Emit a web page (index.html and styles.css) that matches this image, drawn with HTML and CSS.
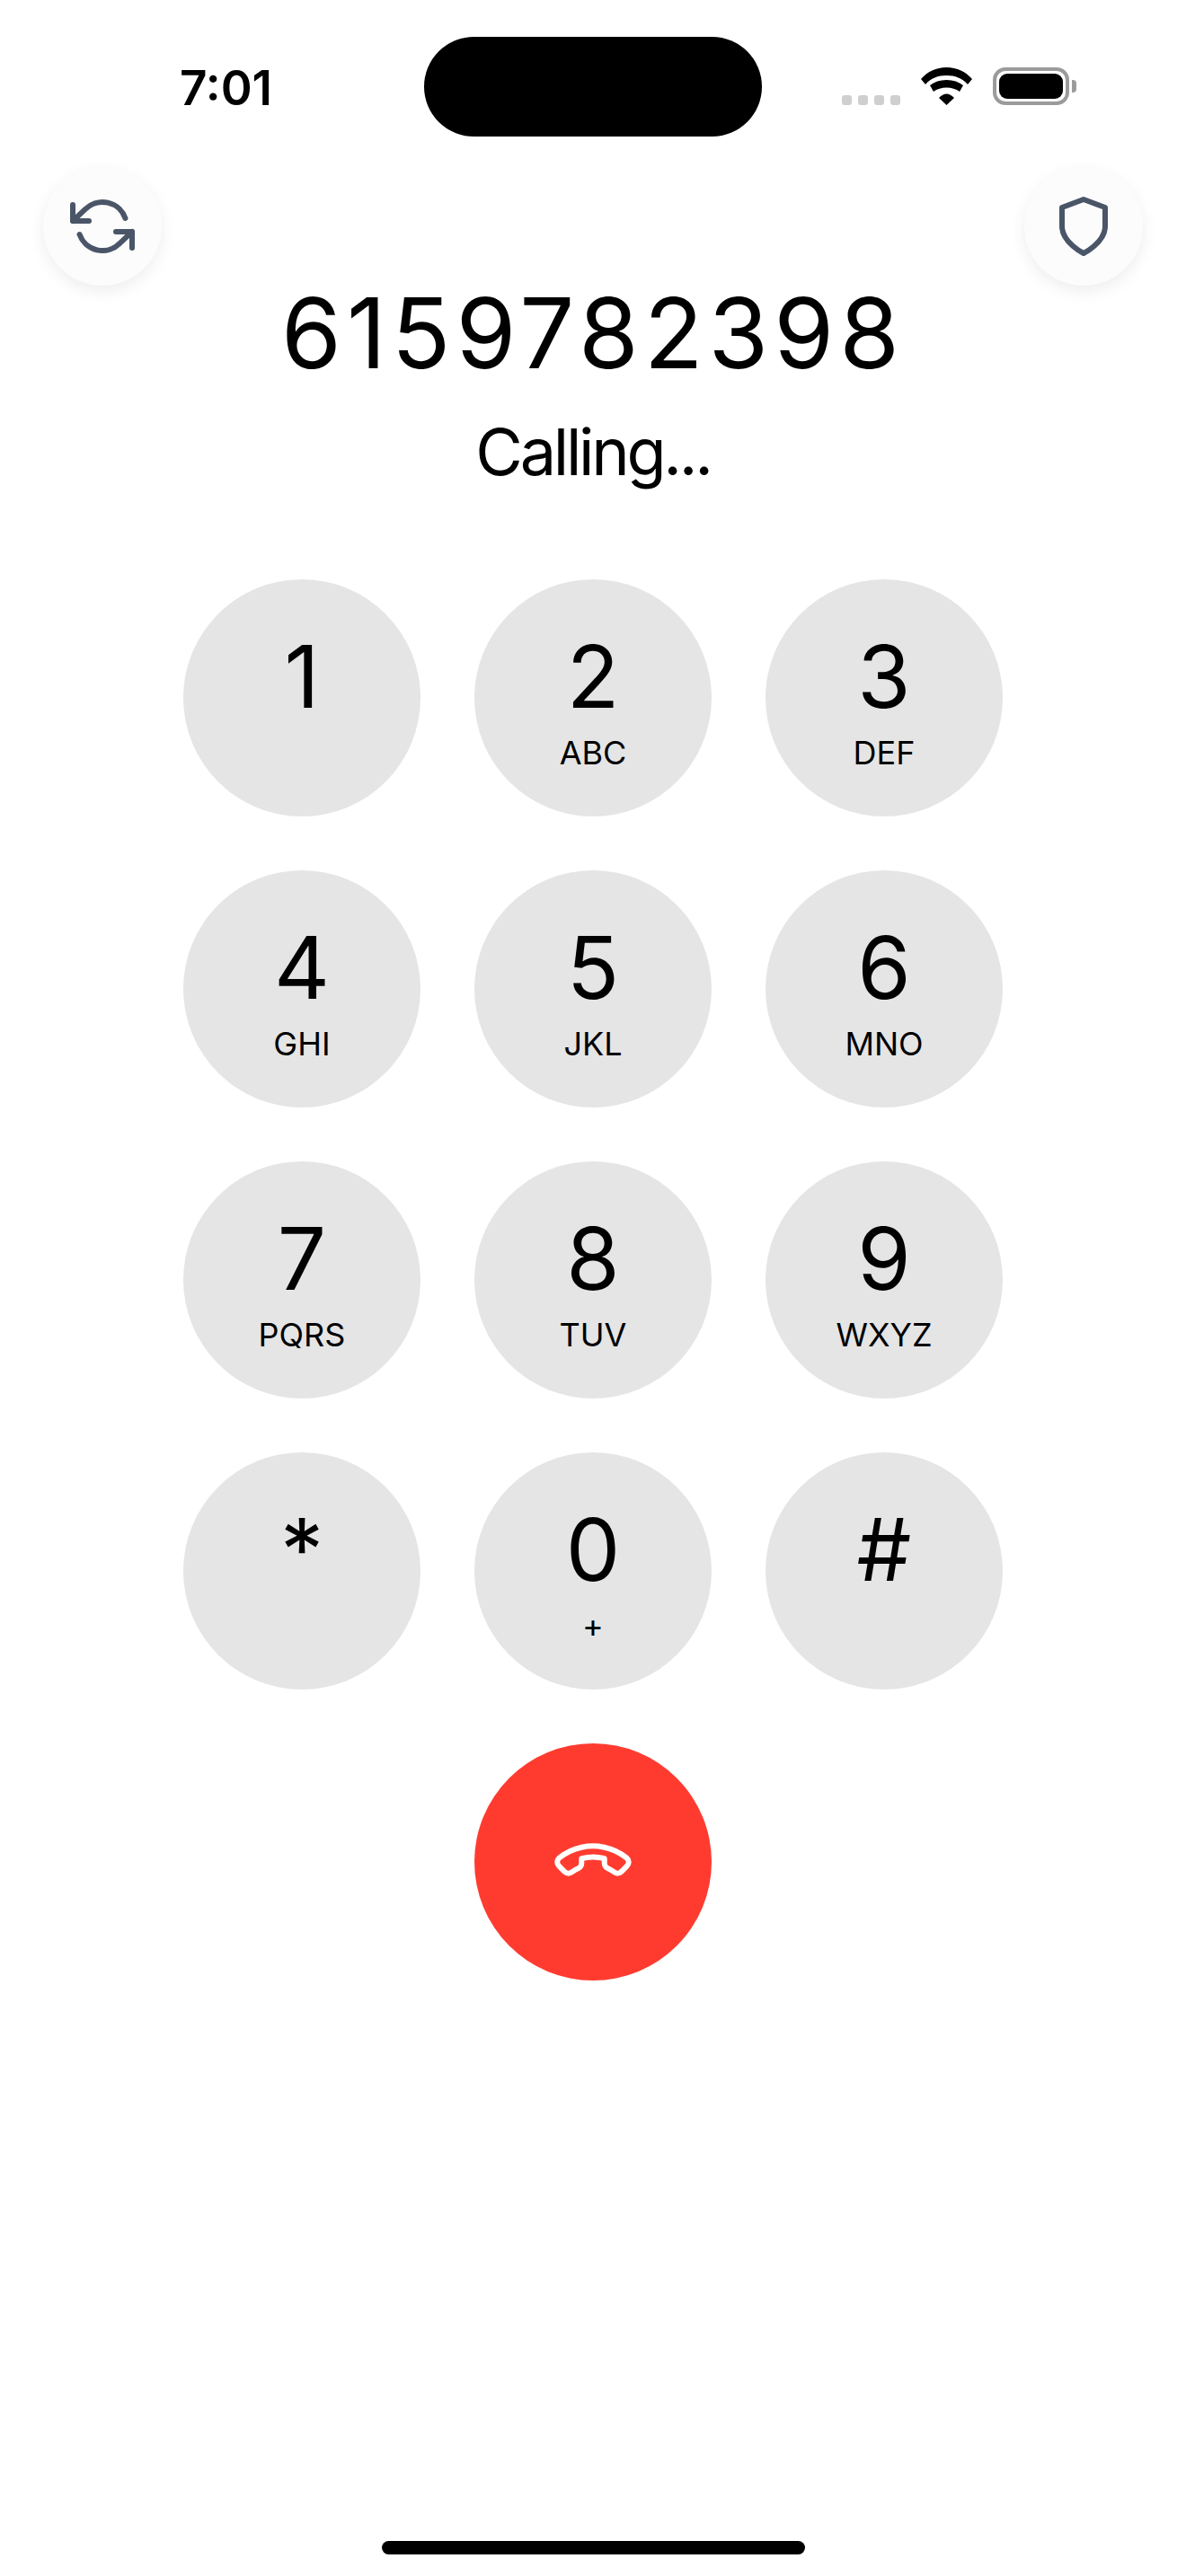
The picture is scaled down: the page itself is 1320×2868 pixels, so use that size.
FILE: index.html
```html
<!DOCTYPE html>
<html lang="en">
  <head>
    <meta charset="UTF-8" />
    <title>Calling</title>
    <link rel="stylesheet" href="styles.css">
  </head>
  <body>
    <div class="screen">
      <div class="status-bar">
        <span class="time">7:01</span>
        <div class="island"></div>
        <div class="status-icons">
          <div class="signal">
            <span class="dot"></span>
            <span class="dot"></span>
            <span class="dot"></span>
            <span class="dot"></span>
          </div>
          <svg class="wifi" width="57" height="42" viewBox="0 0 57 42">
            <path d="M0 13C7 5 17 0 28.5 0S50 5 57 13L52 19C46 12 38 9 28.5 9S11 12 5 19Z" />
            <path d="M10 20C15 16 21 14 28.5 14S42 16 47 20L43 27C39 24 34 22.5 28.5 22.5S18 24 14 27Z" />
            <path d="M20 34C23 31 25.5 29.5 28.5 29.5S34 31 37 34L28.5 42Z" />
          </svg>
          <div class="battery">
            <div class="battery-body"><div class="battery-fill"></div></div>
            <div class="battery-cap"></div>
          </div>
        </div>
      </div>

      <div class="top-actions">
        <button class="round-btn">
          <svg class="line-icon" width="72" height="72" viewBox="0 0 24 24">
            <polyline points="1 4 1 10 7 10" />
            <polyline points="23 20 23 14 17 14" />
            <path d="M20.49 9A9 9 0 0 0 5.64 5.64L1 10m22 4l-4.64 4.36A9 9 0 0 1 3.51 15" />
          </svg>
        </button>
        <button class="round-btn">
          <svg class="line-icon" width="72" height="72" viewBox="0 0 24 24">
            <path d="M12 22s8-4 8-10V5l-8-3-8 3v7c0 6 8 10 8 10z" />
          </svg>
        </button>
      </div>

      <div class="call-info">
        <div class="number">6159782398</div>
        <div class="call-status">Calling...</div>
      </div>

      <div class="keypad">
        <button class="key"><span class="digit">1</span><span class="letters"></span></button>
        <button class="key"><span class="digit">2</span><span class="letters">ABC</span></button>
        <button class="key"><span class="digit">3</span><span class="letters">DEF</span></button>
        <button class="key"><span class="digit">4</span><span class="letters">GHI</span></button>
        <button class="key"><span class="digit">5</span><span class="letters">JKL</span></button>
        <button class="key"><span class="digit">6</span><span class="letters">MNO</span></button>
        <button class="key"><span class="digit">7</span><span class="letters">PQRS</span></button>
        <button class="key"><span class="digit">8</span><span class="letters">TUV</span></button>
        <button class="key"><span class="digit">9</span><span class="letters">WXYZ</span></button>
        <button class="key"><span class="digit">*</span><span class="letters"></span></button>
        <button class="key"><span class="digit">0</span><span class="letters">+</span></button>
        <button class="key"><span class="digit">#</span><span class="letters"></span></button>
      </div>

      <button class="hangup">
        <svg class="hangup-icon" width="72" height="72" viewBox="0 0 24 24">
          <path d="M22 16.92v3a2 2 0 0 1-2.18 2 19.79 19.79 0 0 1-8.63-3.07 19.5 19.5 0 0 1-6-6 19.79 19.79 0 0 1-3.07-8.67A2 2 0 0 1 4.11 2h3a2 2 0 0 1 2 1.72 12.84 12.84 0 0 0 .7 2.81 2 2 0 0 1-.45 2.11L8.09 9.91a16 16 0 0 0 6 6l1.27-1.27a2 2 0 0 1 2.11-.45 12.84 12.84 0 0 0 2.81.7A2 2 0 0 1 22 16.92z" />
        </svg>
      </button>

      <div class="home-indicator"></div>
    </div>
  </body>
</html>
```

FILE: styles.css
```css
* {
  box-sizing: border-box;
}
body {
  margin: 0;
  background: white;
  font-family: Inter, "Liberation Sans", sans-serif;
  color: black;
}
button {
  font-family: inherit;
  color: inherit;
  border: none;
  padding: 0;
}
.screen {
  width: 1320px;
  height: 2868px;
  display: flex;
  flex-direction: column;
  align-items: center;
  overflow: hidden;
}

/* status bar */
.status-bar {
  width: 100%;
  height: 186px;
  padding: 41px 122px 0 200px;
  display: flex;
  justify-content: space-between;
  align-items: flex-start;
}
.time {
  width: 272px;
  margin-top: 25px;
  font-size: 53px;
  font-weight: 600;
  line-height: 64px;
}
.island {
  width: 376px;
  height: 111px;
  background: black;
  border-radius: 56px;
}
.status-icons {
  width: 261px;
  height: 42px;
  margin-top: 34px;
  margin-left: 89px;
  display: flex;
  align-items: flex-end;
}
.signal {
  display: flex;
  gap: 7px;
  margin-right: 23px;
}
.dot {
  width: 11px;
  height: 11px;
  border-radius: 3px;
  background: #cfcfcf;
}
.wifi {
  fill: black;
  margin-right: 23px;
}
.battery {
  display: flex;
  align-items: center;
  gap: 3px;
  height: 42px;
}
.battery-body {
  width: 85px;
  height: 42px;
  padding: 3px;
  border: 4px solid #9b9b9b;
  border-radius: 14px;
}
.battery-fill {
  width: 100%;
  height: 100%;
  background: black;
  border-radius: 9px;
}
.battery-cap {
  width: 5px;
  height: 14px;
  background: #9b9b9b;
  border-radius: 0 4px 4px 0;
}

/* top round buttons */
.top-actions {
  width: 100%;
  height: 132px;
  padding: 0 48px;
  display: flex;
  justify-content: space-between;
}
.round-btn {
  width: 132px;
  height: 132px;
  border-radius: 50%;
  background: #fcfcfc;
  box-shadow: 0 6px 18px rgba(0, 0, 0, 0.07);
  display: flex;
  justify-content: center;
  align-items: center;
}
.line-icon {
  fill: none;
  stroke: #4a5568;
  stroke-width: 2;
  stroke-linecap: round;
  stroke-linejoin: round;
}

/* number and status */
.call-info {
  text-align: center;
}
.number {
  font-size: 108px;
  line-height: 105px;
  letter-spacing: 6px;
}
.call-status {
  margin-top: 36px;
  font-size: 72px;
  line-height: 88px;
  letter-spacing: -3.3px;
}

/* keypad */
.keypad {
  margin-top: 98px;
  display: grid;
  grid-template-columns: repeat(3, 264px);
  gap: 60px;
}
.key {
  width: 264px;
  height: 264px;
  border-radius: 50%;
  background: #e5e5e5;
  display: flex;
  flex-direction: column;
  align-items: center;
  padding-top: 50px;
}
.digit {
  font-size: 96px;
  line-height: 116px;
}
.letters {
  height: 44px;
  margin-top: 5px;
  font-size: 36px;
  line-height: 44px;
}
.hangup {
  margin-top: 60px;
  width: 264px;
  height: 264px;
  border-radius: 50%;
  background: #ff3b30;
  display: flex;
  justify-content: center;
  align-items: center;
}
.hangup-icon {
  fill: none;
  stroke: white;
  stroke-width: 2;
  stroke-linecap: round;
  stroke-linejoin: round;
  transform: rotate(135deg);
}
.home-indicator {
  width: 471px;
  height: 15px;
  margin-top: auto;
  margin-bottom: 24px;
  background: black;
  border-radius: 8px;
}
```
